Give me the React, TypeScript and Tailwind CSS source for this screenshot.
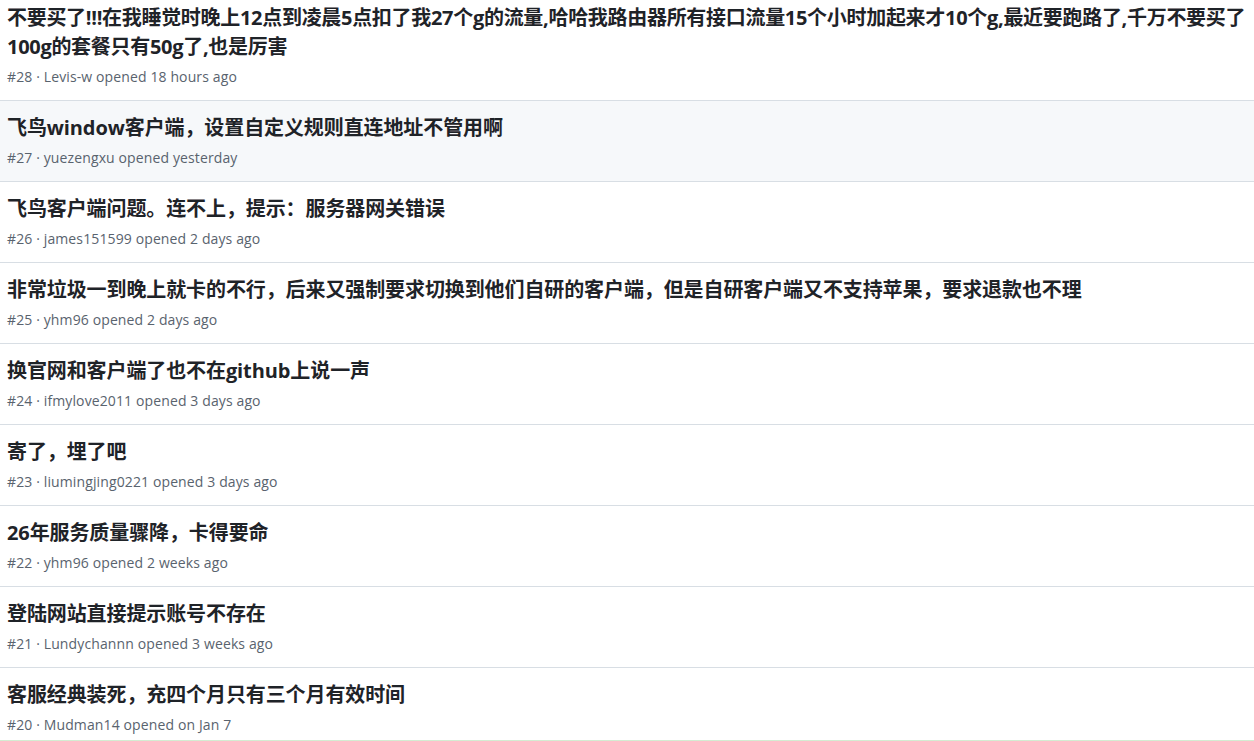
const ISSUES = [
  {
    num: 28,
    title: ['不要买了!!!在我睡觉时晚上12点到凌晨5点扣了我27个g的流量,哈哈我路由器所有接口流量15个小时加起来才10个g,最近要跑路了,千万不要买了', '100g的套餐只有50g了,也是厉害'],
    author: 'Levis-w',
    when: '18 hours ago',
    tight: true,
  },
  { num: 27, title: ['飞鸟window客户端，设置自定义规则直连地址不管用啊'], author: 'yuezengxu', when: 'yesterday', hovered: true },
  { num: 26, title: ['飞鸟客户端问题。连不上，提示：服务器网关错误'], author: 'james151599', when: '2 days ago' },
  {
    num: 25,
    title: ['非常垃圾一到晚上就卡的不行，后来又强制要求切换到他们自研的客户端，但是自研客户端又不支持苹果，要求退款也不理'],
    author: 'yhm96',
    when: '2 days ago',
  },
  { num: 24, title: ['换官网和客户端了也不在github上说一声'], author: 'ifmylove2011', when: '3 days ago' },
  { num: 23, title: ['寄了，埋了吧'], author: 'liumingjing0221', when: '3 days ago' },
  { num: 22, title: ['26年服务质量骤降，卡得要命'], author: 'yhm96', when: '2 weeks ago' },
  { num: 21, title: ['登陆网站直接提示账号不存在'], author: 'Lundychannn', when: '3 weeks ago' },
  { num: 20, title: ['客服经典装死，充四个月只有三个月有效时间'], author: 'Mudman14', when: 'on Jan 7', last: true },
];

export default function App() {
  return (
    <div className="h-[741px] w-full overflow-hidden bg-white font-['Open_Sans','Noto_Sans_CJK_SC',sans-serif]">
      <ul>
        {ISSUES.map((issue, i) => (
          <li
            key={issue.num}
            className={[
              'px-[7px]',
              i === 0 ? 'pt-[3px]' : 'pt-3',
              issue.last ? 'pb-[5px]' : 'pb-[13px] border-b border-[#d8dee4]',
              issue.hovered ? 'bg-[#f6f8fa]' : 'bg-white',
            ].join(' ')}
          >
            <div
              className={[
                'whitespace-nowrap text-[20px] leading-[29px] font-bold text-[#1f2328]',
                issue.tight ? 'tracking-[-0.3px]' : 'tracking-[-0.1px]',
              ].join(' ')}
            >
              {issue.title.map((line, j) => (
                <div key={j}>{line}</div>
              ))}
            </div>
            <div className="mt-[5px] text-[14px] leading-[21px] tracking-[0.12px] text-[#59636e]">
              #{issue.num} · {issue.author} opened {issue.when}
            </div>
          </li>
        ))}
      </ul>
      <div className="h-px bg-[#d4ecd2]" />
    </div>
  );
}
